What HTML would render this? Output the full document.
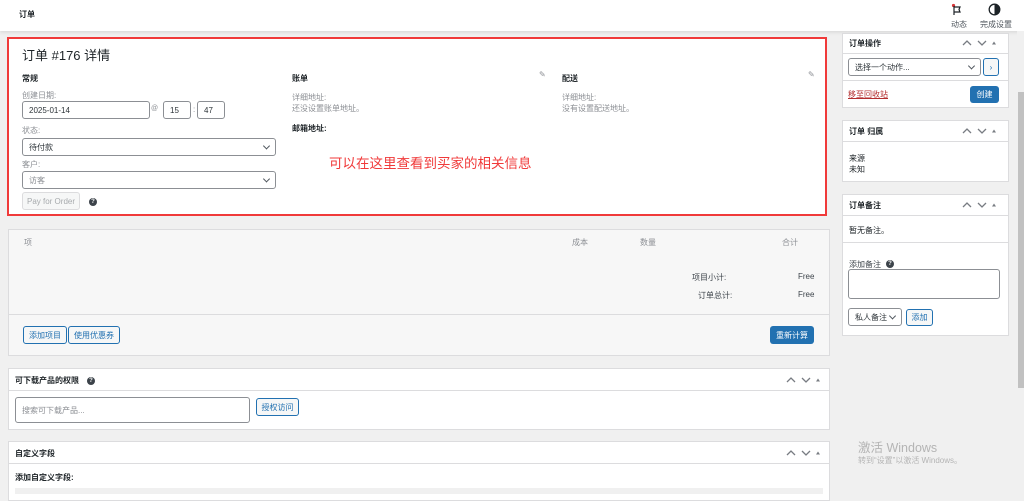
<!DOCTYPE html>
<html><head><meta charset="utf-8"><style>
*{box-sizing:border-box;margin:0;padding:0}
body{width:1024px;height:492px;overflow:hidden;background:#f0f0f0;font-family:"Liberation Sans","Noto Sans CJK SC",sans-serif;font-size:8px;color:#3c434a;position:relative}
.a{position:absolute}
.box{position:absolute;background:#fff;border:1px solid #dcdcde}
.hd{position:absolute;left:0;right:0;top:0;border-bottom:1px solid #dcdcde}
.b{font-weight:bold;color:#1d2327}
.g{color:#8c8f94}
.inp{position:absolute;border:1px solid #8c8f94;border-radius:3px;background:#fff;padding-left:6px;display:flex;align-items:center;font-size:8px;color:#2c3338}
.sel::after{content:"";position:absolute;right:6px;top:50%;width:4px;height:4px;border-right:1.2px solid #50575e;border-bottom:1.2px solid #50575e;transform:translateY(-70%) rotate(45deg)}
.btn2{position:absolute;border:1px solid #2271b1;border-radius:3px;color:#2271b1;background:#f6f7f7;display:flex;align-items:center;justify-content:center;font-size:8px}
.btnp{position:absolute;background:#2271b1;border-radius:3px;color:#fff;display:flex;align-items:center;justify-content:center;font-size:8px}
.arr{position:absolute}
.q{position:absolute;width:8px;height:8px;border-radius:50%;background:#3c434a;color:#fff;font-size:6px;font-weight:bold;text-align:center;line-height:8px}
</style></head><body>
<svg width="0" height="0" style="position:absolute"><defs><g id="ar"><path d="M1 6l4-4 4 4M16 2l4 4 4-4" fill="none" stroke="#787c82" stroke-width="1.3"/><path d="M30 5.5l2-3 2 3z" fill="#787c82"/></g></defs></svg>
<div class="a" style="left:0;top:0;width:1024px;height:31px;background:#fff;box-shadow:0 1px 4px rgba(0,0,0,.12)"></div>
<div class="a b" style="left:19px;top:9px;font-size:8px">订单</div>
<svg class="a" style="left:951px;top:3px" width="14" height="14" viewBox="0 0 14 14"><circle cx="2.5" cy="2.5" r="1.6" fill="#d63638"/><path d="M3 3v9M3 4h6l-1 2.5 1 2.5H3" fill="none" stroke="#1d2327" stroke-width="1.2"/></svg>
<div class="a" style="left:951px;top:19px;color:#50575e">动态</div>
<svg class="a" style="left:988px;top:3px" width="13" height="13" viewBox="0 0 13 13"><circle cx="6.5" cy="6.5" r="5.3" fill="none" stroke="#1d2327" stroke-width="1.3"/><path d="M6.5 1.2a5.3 5.3 0 0 1 0 10.6z" fill="#1d2327"/></svg>
<div class="a" style="left:980px;top:19px;color:#50575e">完成设置</div>

<div class="a" style="left:7px;top:37px;width:820px;height:179px;background:#fff;border:2px solid #f03a3a"></div>
<div class="a" style="left:22px;top:45px;font-size:13px;color:#1d2327">订单 #176 详情</div>
<div class="a b" style="left:22px;top:73px">常规</div>
<div class="a g" style="left:22px;top:90px">创建日期:</div>
<div class="inp" style="left:22px;top:101px;width:128px;height:18px">2025-01-14</div>
<div class="a g" style="left:151px;top:105px;font-size:7px">@</div>
<div class="inp" style="left:163px;top:101px;width:28px;height:18px">15</div>
<div class="a g" style="left:193px;top:105px">:</div>
<div class="inp" style="left:197px;top:101px;width:28px;height:18px">47</div>
<div class="a g" style="left:22px;top:125px">状态:</div>
<div class="inp sel" style="left:22px;top:138px;width:254px;height:18px">待付款</div>
<div class="a g" style="left:22px;top:159px">客户:</div>
<div class="inp sel" style="left:22px;top:171px;width:254px;height:18px;color:#8c8f94">访客</div>
<div class="a" style="left:22px;top:192px;width:58px;height:18px;border:1px solid #dcdcde;border-radius:3px;background:#f6f7f7;color:#a7aaad;font-size:8px;display:flex;align-items:center;justify-content:center">Pay for Order</div>
<div class="q" style="left:89px;top:198px">?</div>
<div class="a b" style="left:292px;top:73px">账单</div>
<div class="a g" style="left:539px;top:70px;font-size:8px">✎</div>
<div class="a g" style="left:292px;top:92px;line-height:11px">详细地址:<br>还没设置账单地址。</div>
<div class="a b" style="left:292px;top:123px">邮箱地址:</div>
<div class="a b" style="left:562px;top:73px">配送</div>
<div class="a g" style="left:808px;top:70px;font-size:8px">✎</div>
<div class="a g" style="left:562px;top:92px;line-height:11px">详细地址:<br>没有设置配送地址。</div>
<div class="a" style="left:329px;top:152px;font-size:13.5px;color:#f03a3a">可以在这里查看到买家的相关信息</div>

<div class="box" style="left:8px;top:229px;width:822px;height:127px;background:#f7f7f7"></div>
<div class="a g" style="left:24px;top:237px">项</div>
<div class="a g" style="left:572px;top:237px">成本</div>
<div class="a g" style="left:640px;top:237px">数量</div>
<div class="a g" style="left:782px;top:237px">合计</div>
<div class="a" style="left:692px;top:272px">项目小计:</div>
<div class="a" style="left:798px;top:272px">Free</div>
<div class="a" style="left:698px;top:290px">订单总计:</div>
<div class="a" style="left:798px;top:290px">Free</div>
<div class="a" style="left:9px;top:314px;width:820px;height:1px;background:#dcdcde"></div>
<div class="btn2" style="left:23px;top:326px;width:44px;height:18px">添加项目</div>
<div class="btn2" style="left:68px;top:326px;width:52px;height:18px">使用优惠券</div>
<div class="btnp" style="left:770px;top:326px;width:44px;height:18px">重新计算</div>

<div class="box" style="left:8px;top:368px;width:822px;height:62px"><div class="hd" style="height:22px"></div></div>
<div class="a b" style="left:15px;top:375px">可下载产品的权限</div>
<div class="q" style="left:87px;top:377px">?</div>
<svg class="arr" style="left:786px;top:376px" width="36" height="8"><use href="#ar"/></svg>
<div class="inp" style="left:15px;top:397px;width:235px;height:26px;color:#8c8f94">搜索可下载产品...</div>
<div class="btn2" style="left:256px;top:398px;width:43px;height:18px">授权访问</div>

<div class="box" style="left:8px;top:441px;width:822px;height:60px"><div class="hd" style="height:22px"></div></div>
<div class="a b" style="left:15px;top:448px">自定义字段</div>
<svg class="arr" style="left:786px;top:449px" width="36" height="8"><use href="#ar"/></svg>
<div class="a b" style="left:15px;top:472px">添加自定义字段:</div>
<div class="a" style="left:15px;top:488px;width:808px;height:6px;background:#f0f0f0"></div>

<div class="box" style="left:842px;top:33px;width:167px;height:75px"><div class="hd" style="height:20px"></div></div>
<div class="a b" style="left:849px;top:38px">订单操作</div>
<svg class="arr" style="left:962px;top:39px" width="36" height="8"><use href="#ar"/></svg>
<div class="inp sel" style="left:848px;top:58px;width:133px;height:18px">选择一个动作...</div>
<div class="btn2" style="left:983px;top:58px;width:16px;height:18px">›</div>
<div class="a" style="left:843px;top:80px;width:165px;height:1px;background:#dcdcde"></div>
<div class="a" style="left:848px;top:89px;color:#b32d2e;text-decoration:underline">移至回收站</div>
<div class="btnp" style="left:970px;top:86px;width:29px;height:17px">创建</div>

<div class="box" style="left:842px;top:120px;width:167px;height:62px"><div class="hd" style="height:21px"></div></div>
<div class="a b" style="left:849px;top:126px">订单 归属</div>
<svg class="arr" style="left:962px;top:127px" width="36" height="8"><use href="#ar"/></svg>
<div class="a" style="left:849px;top:153px;line-height:11px;color:#1d2327">来源<br>未知</div>

<div class="box" style="left:842px;top:194px;width:167px;height:142px"><div class="hd" style="height:21px"></div></div>
<div class="a b" style="left:849px;top:200px">订单备注</div>
<svg class="arr" style="left:962px;top:201px" width="36" height="8"><use href="#ar"/></svg>
<div class="a" style="left:849px;top:225px;color:#1d2327">暂无备注。</div>
<div class="a" style="left:843px;top:242px;width:165px;height:1px;background:#dcdcde"></div>
<div class="a" style="left:849px;top:259px">添加备注</div>
<div class="q" style="left:886px;top:260px">?</div>
<div class="inp" style="left:848px;top:269px;width:152px;height:30px"></div>
<div class="inp sel" style="left:848px;top:308px;width:54px;height:18px">私人备注</div>
<div class="btn2" style="left:906px;top:309px;width:27px;height:17px">添加</div>

<div class="a" style="left:858px;top:437px;font-size:12.5px;color:#b4b4b4">激活 Windows</div>
<div class="a" style="left:858px;top:455px;font-size:8px;color:#b4b4b4">转到“设置”以激活 Windows。</div>

<div class="a" style="left:1017px;top:31px;width:7px;height:461px;background:#f0f0f0"></div>
<div class="a" style="left:1018px;top:92px;width:6px;height:296px;background:#c1c1c1"></div>
</body></html>
